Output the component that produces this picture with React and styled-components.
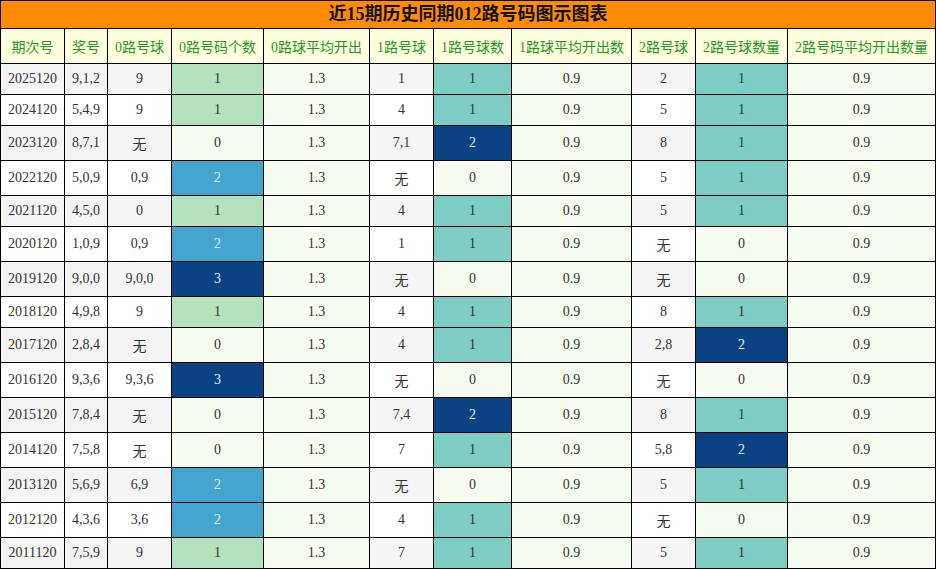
import React from 'react';
import styled, { createGlobalStyle } from 'styled-components';

const GlobalStyle = createGlobalStyle`
  html, body {
    margin: 0;
    padding: 0;
    background: #fff;
  }
`;

const Table = styled.table`
  width: 936px;
  table-layout: fixed;
  border-collapse: collapse;
  font-family: "Liberation Serif", "Noto Sans CJK SC", serif;
  font-size: 14px;
  color: #333;
`;

const TitleCell = styled.th`
  background: #ff8c00;
  border: 1px solid #000;
  padding: 0;
  height: 27px;
  line-height: 27px;
  font-size: 18px;
  font-weight: bold;
  color: #111;
  text-align: center;
`;

const HeadCell = styled.th`
  background: #ffffe0;
  border: 1px solid #000;
  padding: 7px 0;
  font-weight: normal;
  color: #1f9a1f;
  text-align: center;
  white-space: nowrap;
`;

const Cell = styled.td`
  background: ${p => p.$bg || '#fff'};
  color: ${p => (p.$light ? '#e6eef8' : '#333')};
  border: 1px solid #000;
  padding: 7px 0;
  text-align: center;
  white-space: nowrap;
`;

const widths = [64, 43, 64, 92, 106, 64, 78, 120, 64, 92, 148];

const heads = [
  '期次号', '奖号', '0路号球', '0路号码个数', '0路球平均开出',
  '1路号球', '1路号球数', '1路球平均开出数', '2路号球', '2路号球数量', '2路号码平均开出数量',
];

const rows = [
  ['2025120', '9,1,2', '9', 1, '1.3', '1', 1, '0.9', '2', 1, '0.9'],
  ['2024120', '5,4,9', '9', 1, '1.3', '4', 1, '0.9', '5', 1, '0.9'],
  ['2023120', '8,7,1', '无', 0, '1.3', '7,1', 2, '0.9', '8', 1, '0.9'],
  ['2022120', '5,0,9', '0,9', 2, '1.3', '无', 0, '0.9', '5', 1, '0.9'],
  ['2021120', '4,5,0', '0', 1, '1.3', '4', 1, '0.9', '5', 1, '0.9'],
  ['2020120', '1,0,9', '0,9', 2, '1.3', '1', 1, '0.9', '无', 0, '0.9'],
  ['2019120', '9,0,0', '9,0,0', 3, '1.3', '无', 0, '0.9', '无', 0, '0.9'],
  ['2018120', '4,9,8', '9', 1, '1.3', '4', 1, '0.9', '8', 1, '0.9'],
  ['2017120', '2,8,4', '无', 0, '1.3', '4', 1, '0.9', '2,8', 2, '0.9'],
  ['2016120', '9,3,6', '9,3,6', 3, '1.3', '无', 0, '0.9', '无', 0, '0.9'],
  ['2015120', '7,8,4', '无', 0, '1.3', '7,4', 2, '0.9', '8', 1, '0.9'],
  ['2014120', '7,5,8', '无', 0, '1.3', '7', 1, '0.9', '5,8', 2, '0.9'],
  ['2013120', '5,6,9', '6,9', 2, '1.3', '无', 0, '0.9', '5', 1, '0.9'],
  ['2012120', '4,3,6', '3,6', 2, '1.3', '4', 1, '0.9', '无', 0, '0.9'],
  ['2011120', '7,5,9', '9', 1, '1.3', '7', 1, '0.9', '5', 1, '0.9'],
];

const PALE = '#f7fcf0';
const GRAY = '#f4f4f4';
// colour scales per count column (max 3 for 0路, max 2 for 1路/2路)
const scale3 = ['#f7fcf0', '#b4e2bf', '#43a5cd', '#0a4283'];
const scale2 = ['#f7fcf0', '#7ecdc5', '#0a4283'];

function cellStyle(col, value, rowIdx) {
  if (col === 3) return { bg: scale3[value], light: value >= 2 };
  if (col === 6 || col === 9) return { bg: scale2[value], light: value >= 2 };
  if (col === 4 || col === 7 || col === 10) return { bg: PALE };
  return { bg: rowIdx % 2 === 0 ? GRAY : '#fff' };
}

export default function App() {
  return (
    <>
      <GlobalStyle />
      <Table>
        <colgroup>
          {widths.map((w, i) => <col key={i} style={{ width: w }} />)}
        </colgroup>
        <thead>
          <tr>
            <TitleCell colSpan={11}>近15期历史同期012路号码图示图表</TitleCell>
          </tr>
          <tr>
            {heads.map(h => <HeadCell key={h}>{h}</HeadCell>)}
          </tr>
        </thead>
        <tbody>
          {rows.map((r, ri) => (
            <tr key={r[0]}>
              {r.map((v, ci) => {
                const s = cellStyle(ci, v, ri);
                return <Cell key={ci} $bg={s.bg} $light={s.light}>{v}</Cell>;
              })}
            </tr>
          ))}
        </tbody>
      </Table>
    </>
  );
}
